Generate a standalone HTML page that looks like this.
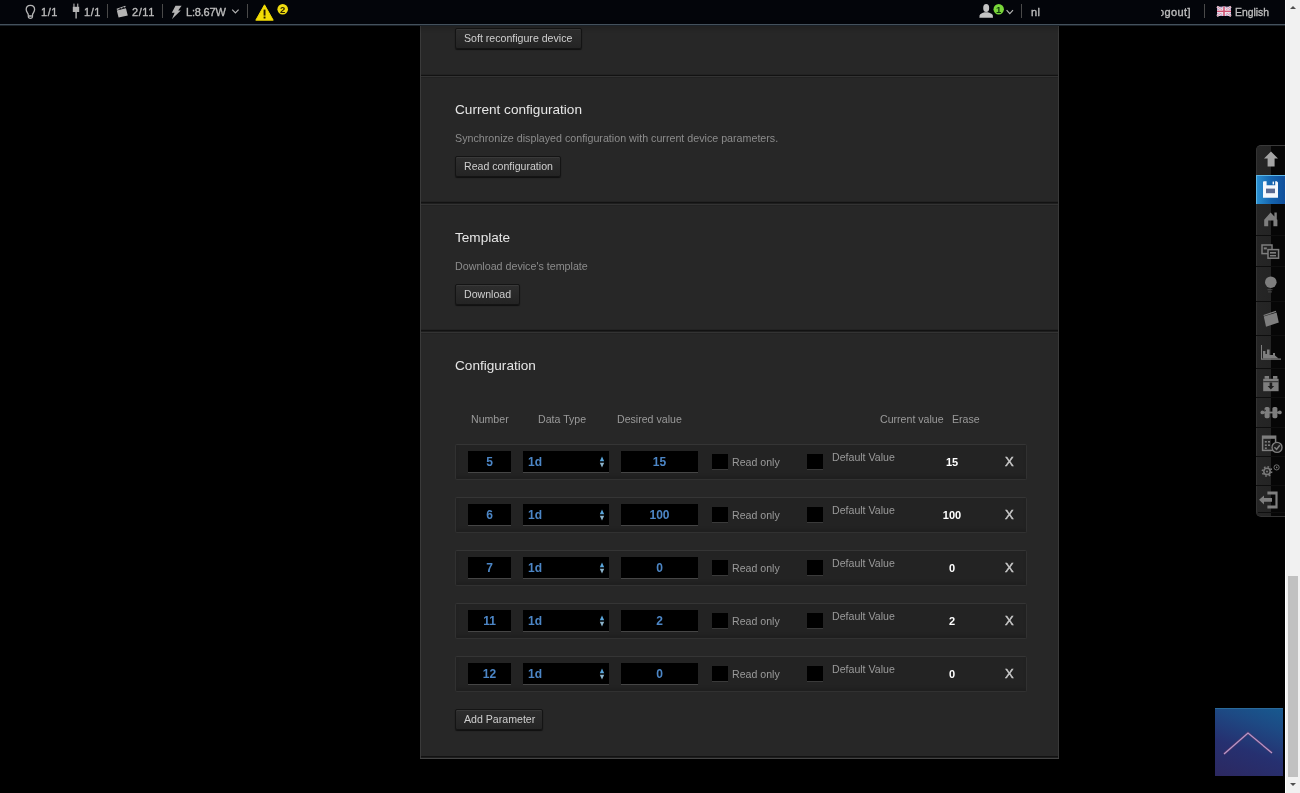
<!DOCTYPE html>
<html><head><meta charset="utf-8">
<style>
*{box-sizing:border-box}
html,body{margin:0;padding:0}
body{width:1300px;height:793px;overflow:hidden;background:#000;position:relative;-webkit-font-smoothing:antialiased;font-family:"Liberation Sans",sans-serif;}
.a{position:absolute;white-space:nowrap}
#hdr{position:absolute;left:0;top:0;width:1286px;height:24px;background:#03050a;}
#hdrline{position:absolute;left:0;top:24px;width:1286px;height:1px;background:#44515c;box-shadow:0 2px 5px rgba(0,0,0,.75)}
#hdrline2{position:absolute;left:0;top:25px;width:1286px;height:1px;background:#1a2128;}
.ht{font-size:11px;font-weight:normal;color:#bdbdbd;line-height:13px;-webkit-text-stroke:0.35px #bdbdbd;letter-spacing:0.6px}
.sep{position:absolute;width:1px;background:#4a4a4a;top:4px;height:14px}
#panel{position:absolute;left:420px;top:0;width:639px;height:759px;background:#272727;border-left:1px solid #3a3a3a;border-right:1px solid #3a3a3a;}
.hs{position:absolute;left:421px;width:637px;height:1px;}
.btn{position:absolute;height:21px;background:linear-gradient(#2e2e2e,#242424);border:1px solid #141414;box-shadow:inset 0 1px 0 #3a3a3a,0 1px 1px rgba(0,0,0,.6);border-radius:2px;color:#cfcfcf;font-size:10.6px;line-height:19px;padding:0 0 0 8px;}
.h2{font-size:13.6px;color:#e6e6e6;line-height:16px;}
.desc{font-size:10.7px;color:#8c8c8c;line-height:13px;}
.th{font-size:10.6px;color:#9a9a9a;line-height:13px;}
.row{position:absolute;left:455px;width:572px;height:36px;background:#232323;border:1px solid #313131;border-top-color:#353535;border-radius:2px;box-shadow:inset 0 -3px 3px rgba(0,0,0,.12)}
.inp{position:absolute;height:22px;background:#000;border-bottom:1px solid #454545;color:#4c86c6;font-size:12px;font-weight:bold;line-height:23px;text-align:center;}
.cb{position:absolute;width:16px;height:16px;background:#000;border-bottom:1px solid #3a3a3a}
.lbl{font-size:10.6px;color:#9a9a9a;line-height:13px;}
.cv{font-size:11px;color:#fff;font-weight:bold;line-height:13px;text-align:center;width:40px}
.x{font-size:13px;color:#c8c8c8;line-height:14px;font-weight:normal;-webkit-text-stroke:0.45px #c8c8c8}
#tb{position:absolute;left:1256px;top:145px;width:29px;height:372px;background:linear-gradient(90deg,#333 0,#333 1px,#262626 1px,#242424 15px,#060606 15px,#060606 100%);border-radius:5px 0 0 5px;border-top:1px solid #3a3a3a;border-bottom:1px solid #333}
.tbs{position:absolute;left:1256px;width:29px;height:2px;background:linear-gradient(#0c0c0c 50%,#333 50%)}
#tbact{position:absolute;left:1256px;top:175px;width:29px;height:29px;background:linear-gradient(90deg,#2a8fd0,#1565b0 50%,#0f4e9a);border-top:1px solid #5cb6e6;border-left:1px solid #5cb6e6}
.tbs{position:absolute;left:1256px;width:29px;height:1px;background:#0e0e0e}
#sb{position:absolute;left:1285px;top:0;width:15px;height:793px;background:#f1f1f1;border-left:1px solid #fff}
#thumb{position:absolute;left:1288px;top:576px;width:10px;height:201px;background:#c1c1c1}
#sbu{position:absolute;left:1290px;top:6px;width:0;height:0;border-left:3.5px solid transparent;border-right:3.5px solid transparent;border-bottom:3.5px solid #505050}
#sbd{position:absolute;left:1290px;top:783px;width:0;height:0;border-left:3.5px solid transparent;border-right:3.5px solid transparent;border-top:3.5px solid #505050}
#totop{position:absolute;left:1215px;top:708px;width:68px;height:68px;background:linear-gradient(20deg,#2c2860 0%,#263070 40%,#1d4a84 75%,#17598f 100%);border-top:1px solid #2a6a9a}
</style></head>
<body>
<div id="root" style="position:absolute;left:0;top:0;width:1300px;height:793px;will-change:transform">
<!-- panel -->
<div id="panel"></div>
<div class="hs" style="top:74px;background:#222"></div>
<div class="hs" style="top:75px;background:#121212"></div>
<div class="hs" style="top:76px;background:#333"></div>
<div class="hs" style="top:77px;background:#222"></div>
<div class="hs" style="top:201px;background:#222"></div>
<div class="hs" style="top:202px;background:#121212"></div>
<div class="hs" style="top:203px;background:#1e1e1e"></div>
<div class="hs" style="top:204px;background:#333"></div>
<div class="hs" style="top:205px;background:#232323"></div>
<div class="hs" style="top:329px;background:#222"></div>
<div class="hs" style="top:330px;background:#121212"></div>
<div class="hs" style="top:331px;background:#1e1e1e"></div>
<div class="hs" style="top:332px;background:#333"></div>
<div class="hs" style="top:333px;background:#232323"></div>
<div class="hs" style="top:756px;background:#121212"></div>
<div class="hs" style="top:757px;background:#1e1e1e"></div>
<div class="hs" style="top:758px;background:#444;left:420px;width:639px"></div>

<div class="btn a" style="left:455px;top:28px;width:127px">Soft reconfigure device</div>

<div class="a h2" style="left:455px;top:102px">Current configuration</div>
<div class="a desc" style="left:455px;top:132px">Synchronize displayed configuration with current device parameters.</div>
<div class="btn a" style="left:455px;top:156px;width:106px">Read configuration</div>

<div class="a h2" style="left:455px;top:230px">Template</div>
<div class="a desc" style="left:455px;top:260px">Download device's template</div>
<div class="btn a" style="left:455px;top:284px;width:65px">Download</div>

<div class="a h2" style="left:455px;top:358px">Configuration</div>
<div class="a th" style="left:471px;top:413px">Number</div>
<div class="a th" style="left:538px;top:413px">Data Type</div>
<div class="a th" style="left:617px;top:413px">Desired value</div>
<div class="a th" style="left:880px;top:413px">Current value</div>
<div class="a th" style="left:952px;top:413px">Erase</div>

<!--ROWS-->
<div class="row" style="top:444px"></div>
<div class="inp" style="left:468px;top:451px;width:43px">5</div>
<div class="inp" style="left:523px;top:451px;width:86px;text-align:left;padding-left:5px">1d</div>
<svg class="a" style="left:599px;top:456px" width="6" height="12" viewBox="0 0 6 12"><path d="M3 0.5 L5.2 5.2 H0.8Z" fill="#5aa6dc"/><path d="M0.8 6.8 H5.2 L3 11.5Z" fill="#8cb4cc"/></svg>
<div class="inp" style="left:621px;top:451px;width:77px">15</div>
<div class="cb" style="left:712px;top:454px"></div>
<div class="a lbl" style="left:732px;top:456px">Read only</div>
<div class="cb" style="left:807px;top:454px"></div>
<div class="a lbl" style="left:832px;top:451px">Default Value</div>
<div class="a cv" style="left:932px;top:456px">15</div>
<div class="a x" style="left:1005px;top:455px">X</div>
<div class="row" style="top:497px"></div>
<div class="inp" style="left:468px;top:504px;width:43px">6</div>
<div class="inp" style="left:523px;top:504px;width:86px;text-align:left;padding-left:5px">1d</div>
<svg class="a" style="left:599px;top:509px" width="6" height="12" viewBox="0 0 6 12"><path d="M3 0.5 L5.2 5.2 H0.8Z" fill="#5aa6dc"/><path d="M0.8 6.8 H5.2 L3 11.5Z" fill="#8cb4cc"/></svg>
<div class="inp" style="left:621px;top:504px;width:77px">100</div>
<div class="cb" style="left:712px;top:507px"></div>
<div class="a lbl" style="left:732px;top:509px">Read only</div>
<div class="cb" style="left:807px;top:507px"></div>
<div class="a lbl" style="left:832px;top:504px">Default Value</div>
<div class="a cv" style="left:932px;top:509px">100</div>
<div class="a x" style="left:1005px;top:508px">X</div>
<div class="row" style="top:550px"></div>
<div class="inp" style="left:468px;top:557px;width:43px">7</div>
<div class="inp" style="left:523px;top:557px;width:86px;text-align:left;padding-left:5px">1d</div>
<svg class="a" style="left:599px;top:562px" width="6" height="12" viewBox="0 0 6 12"><path d="M3 0.5 L5.2 5.2 H0.8Z" fill="#5aa6dc"/><path d="M0.8 6.8 H5.2 L3 11.5Z" fill="#8cb4cc"/></svg>
<div class="inp" style="left:621px;top:557px;width:77px">0</div>
<div class="cb" style="left:712px;top:560px"></div>
<div class="a lbl" style="left:732px;top:562px">Read only</div>
<div class="cb" style="left:807px;top:560px"></div>
<div class="a lbl" style="left:832px;top:557px">Default Value</div>
<div class="a cv" style="left:932px;top:562px">0</div>
<div class="a x" style="left:1005px;top:561px">X</div>
<div class="row" style="top:603px"></div>
<div class="inp" style="left:468px;top:610px;width:43px">11</div>
<div class="inp" style="left:523px;top:610px;width:86px;text-align:left;padding-left:5px">1d</div>
<svg class="a" style="left:599px;top:615px" width="6" height="12" viewBox="0 0 6 12"><path d="M3 0.5 L5.2 5.2 H0.8Z" fill="#5aa6dc"/><path d="M0.8 6.8 H5.2 L3 11.5Z" fill="#8cb4cc"/></svg>
<div class="inp" style="left:621px;top:610px;width:77px">2</div>
<div class="cb" style="left:712px;top:613px"></div>
<div class="a lbl" style="left:732px;top:615px">Read only</div>
<div class="cb" style="left:807px;top:613px"></div>
<div class="a lbl" style="left:832px;top:610px">Default Value</div>
<div class="a cv" style="left:932px;top:615px">2</div>
<div class="a x" style="left:1005px;top:614px">X</div>
<div class="row" style="top:656px"></div>
<div class="inp" style="left:468px;top:663px;width:43px">12</div>
<div class="inp" style="left:523px;top:663px;width:86px;text-align:left;padding-left:5px">1d</div>
<svg class="a" style="left:599px;top:668px" width="6" height="12" viewBox="0 0 6 12"><path d="M3 0.5 L5.2 5.2 H0.8Z" fill="#5aa6dc"/><path d="M0.8 6.8 H5.2 L3 11.5Z" fill="#8cb4cc"/></svg>
<div class="inp" style="left:621px;top:663px;width:77px">0</div>
<div class="cb" style="left:712px;top:666px"></div>
<div class="a lbl" style="left:732px;top:668px">Read only</div>
<div class="cb" style="left:807px;top:666px"></div>
<div class="a lbl" style="left:832px;top:663px">Default Value</div>
<div class="a cv" style="left:932px;top:668px">0</div>
<div class="a x" style="left:1005px;top:667px">X</div>
<!--/ROWS-->

<div class="btn a" style="left:455px;top:709px;width:88px">Add Parameter</div>

<!-- header -->
<div id="hdr"></div>
<div id="hdrline"></div>
<div id="hdrline2"></div>
<div class="a ht" style="left:41px;top:6px">1/1</div>
<div class="a ht" style="left:84px;top:6px">1/1</div>
<div class="sep" style="left:107px"></div>
<div class="a ht" style="left:132px;top:6px">2/11</div>
<div class="sep" style="left:162px"></div>
<div class="a ht" style="left:186px;top:6px;letter-spacing:-0.2px">L:8.67W</div>
<div class="sep" style="left:247px"></div>
<div class="sep" style="left:1021px"></div>
<div class="a" style="left:1031px;top:0;width:10px;height:24px;overflow:hidden"><div class="a ht" style="left:0;top:6px;letter-spacing:0.3px">nl:</div></div>
<div class="a" style="left:1161px;top:0;width:32px;height:24px;overflow:hidden"><div class="a ht" style="left:-3px;top:6px;letter-spacing:0.4px">ogout]</div></div>
<div class="sep" style="left:1204px"></div>
<div class="a ht" style="left:1235px;top:6px;letter-spacing:0;font-size:10.4px">English</div>
<!--HDRICONS-->
<svg class="a" style="left:0;top:0" width="1286" height="24" viewBox="0 0 1286 24">
 <!-- bulb -->
 <path d="M30.4 5.3 C27.8 5.3 26.2 7.3 26.2 9.6 C26.2 11.6 27.6 12.8 28.2 14.2 L28.4 17.2 C28.6 18 29.2 18.3 30.4 18.3 C31.6 18.3 32.2 18 32.4 17.2 L32.6 14.2 C33.2 12.8 34.6 11.6 34.6 9.6 C34.6 7.3 33 5.3 30.4 5.3Z" fill="none" stroke="#b4b4b4" stroke-width="1.3"/>
 <rect x="29" y="15.2" width="2.8" height="1.6" fill="#b4b4b4"/>
 <!-- plug -->
 <rect x="73.4" y="3.6" width="1.1" height="3.4" fill="#b4b4b4"/>
 <rect x="77.2" y="3.6" width="1.1" height="3.4" fill="#b4b4b4"/>
 <rect x="72.8" y="6.8" width="6.4" height="5.2" fill="#b4b4b4"/>
 <rect x="75.4" y="12" width="1.4" height="6.5" fill="#b4b4b4"/>
 <!-- clapper -->
 <path d="M116.8 10.4 L125.9 8.2 L127.8 15.6 L118.6 17.4Z" fill="#b4b4b4"/>
 <path d="M116.6 8.8 L125.2 5.8 L125.7 7.1 L117 9.9Z" fill="#b4b4b4"/>
 <path d="M119.4 8.2 L120.4 7.8 L121 8.9 L120 9.2Z M122.4 7.2 L123.4 6.8 L124 7.9 L123 8.2Z" fill="#03050a"/>
 <!-- bolt -->
 <path d="M175.5 5.8 L181.6 5.8 L178.2 10.6 L180.8 10.6 L172 19 L174.6 12.8 L171.8 12.8Z" fill="#b4b4b4"/>
 <!-- chevron -->
 <polyline points="232.2,9.6 235.4,12.8 238.6,9.6" fill="none" stroke="#b4b4b4" stroke-width="1.2"/>
 <!-- warning -->
 <path d="M264.5 4.8 L273.2 20.2 L255.8 20.2Z" fill="#f3dd05" stroke="#f3dd05" stroke-width="1" stroke-linejoin="round"/>
 <rect x="263.6" y="9.6" width="1.9" height="6" fill="#2a1a00"/>
 <rect x="263.6" y="16.6" width="1.9" height="1.9" fill="#2a1a00"/>
 <circle cx="282.7" cy="9.3" r="5.3" fill="#f0dc10"/>
 <text x="282.7" y="12.9" font-family="Liberation Sans" font-weight="bold" font-size="9.5" text-anchor="middle" fill="#2a2200">2</text>
 <!-- user -->
 <ellipse cx="986.2" cy="8" rx="3" ry="3.9" fill="#c4c4c4"/>
 <path d="M979.4 17.8 L979.6 15.4 C980 13.6 982.4 12.8 984.6 12.2 L987.8 12.2 C990 12.8 992.4 13.6 992.8 15.4 L993 17.8Z" fill="#c4c4c4"/>
 <circle cx="998.7" cy="9.3" r="5.2" fill="#79d63a"/>
 <text x="998.7" y="12.8" font-family="Liberation Sans" font-weight="bold" font-size="9.5" text-anchor="middle" fill="#0e3a0a">1</text>
 <polyline points="1006.6,10.2 1009.8,13.6 1013,10.2" fill="none" stroke="#b4b4b4" stroke-width="1.2"/>
 <!-- flag -->
 <g transform="translate(1217,6.6)">
  <rect width="14" height="9.4" fill="#b8a0c8"/>
  <path d="M0 0 L14 9.4 M14 0 L0 9.4" stroke="#f0e8f0" stroke-width="2.2"/>
  <path d="M0 0 L14 9.4 M14 0 L0 9.4" stroke="#d06080" stroke-width="0.7"/>
  <rect x="5.4" y="0" width="3.2" height="9.4" fill="#f4eef4"/>
  <rect x="0" y="3.3" width="14" height="2.8" fill="#f4eef4"/>
  <rect x="6.2" y="0" width="1.6" height="9.4" fill="#d05070"/>
  <rect x="0" y="4" width="14" height="1.4" fill="#d05070"/>
 </g>
</svg><!--/HDRICONS-->

<!-- toolbar -->
<div id="tb"></div>
<div id="tbact"></div>
<div class="tbs" style="top:235px"></div>
<div class="tbs" style="top:266px"></div>
<div class="tbs" style="top:301px"></div>
<div class="tbs" style="top:335px"></div>
<div class="tbs" style="top:368px"></div>
<div class="tbs" style="top:397px"></div>
<div class="tbs" style="top:427px"></div>
<div class="tbs" style="top:456px"></div>
<div class="tbs" style="top:485px"></div>
<div class="tbs" style="top:512px;left:1258px;width:27px"></div>
<!--TBICONS-->
<svg class="a" style="left:1256px;top:145px" width="29" height="372" viewBox="1256 145 29 372">
 <!-- up arrow -->
 <path d="M1271 151.5 L1278 158.6 L1274.6 158.6 L1274.6 166.4 L1267.6 166.4 L1267.6 158.6 L1264 158.6Z" fill="#a4a4a4"/>
 <!-- floppy -->
 <path d="M1263 182.2 Q1263 181.2 1264 181.2 L1266.6 181.2 L1266.6 185.2 L1275.2 185.2 L1275.2 181.2 L1276.8 181.2 L1278 182.4 L1278 197.8 L1263 197.8Z" fill="#f4f8fc"/>
 <rect x="1272.6" y="181.6" width="1.4" height="2.8" fill="#f4f8fc"/>
 <rect x="1266" y="188.6" width="9" height="4.6" fill="#5a6a90"/>
 <!-- home -->
 <path d="M1264.2 219.8 L1270.6 212.4 L1274.4 216.6 L1274.4 212.4 L1276.8 212.4 L1276.8 219.2 L1277.4 219.8 L1277.4 226.2 L1273.4 226.2 L1273.4 220.6 L1268.2 220.6 L1268.2 226.2 L1264.2 226.2Z" fill="#7e7e7e"/>
 <!-- display -->
 <rect x="1262" y="245" width="10" height="8.6" fill="none" stroke="#7e7e7e" stroke-width="1.5"/>
 <rect x="1268" y="249.6" width="10.6" height="8.6" fill="#1a1a1a" stroke="#7e7e7e" stroke-width="1.5"/>
 <rect x="1263.8" y="247.4" width="3" height="2" fill="#7e7e7e"/>
 <rect x="1270" y="252" width="6" height="1.6" fill="#7e7e7e"/>
 <rect x="1270" y="255" width="6" height="1.4" fill="#7e7e7e"/>
 <!-- bulb -->
 <circle cx="1270.8" cy="282.2" r="5.8" fill="#7e7e7e"/>
 <rect x="1267.5" y="289.2" width="5" height="1" fill="#4a4a4a"/>
 <rect x="1268" y="291.4" width="4" height="1" fill="#4a4a4a"/>
 <!-- clapper -->
 <path d="M1263.8 316.6 L1276.6 312.6 L1278.8 322.6 L1266 326.8Z" fill="#7e7e7e"/>
 <path d="M1263.4 315 L1275.8 310.8 L1276.2 311.9 L1263.8 316Z" fill="#7e7e7e"/>
 <!-- chart -->
 <path d="M1261 345 L1262 345 L1262 358.6 L1281 358.6 L1281 359.8 L1261 359.8Z" fill="#7e7e7e"/>
 <path d="M1263 358.6 L1263 351 L1265.4 351 L1265.4 354 L1267 354 L1267 349.6 L1269.6 349.6 L1269.6 355 L1273 355 L1273 353 L1275 353 L1275 355.6 L1278.6 358.6Z" fill="#7e7e7e"/>
 <!-- box download -->
 <rect x="1263.2" y="378.8" width="15.4" height="12.4" fill="#7e7e7e"/>
 <rect x="1264.6" y="376" width="4.4" height="2.8" fill="#7e7e7e"/>
 <rect x="1273" y="376" width="4.4" height="2.8" fill="#7e7e7e"/>
 <rect x="1263.2" y="381.2" width="15.4" height="1" fill="#2a2a2a"/>
 <path d="M1269.6 382.6 L1272.2 382.6 L1272.2 386 L1274.2 386 L1270.9 389.6 L1267.6 386 L1269.6 386Z" fill="#1e1e1e"/>
 <!-- puzzle -->
 <rect x="1264.6" y="407" width="5" height="11.2" rx="1.6" fill="#7e7e7e"/>
 <rect x="1272.4" y="407" width="5" height="11.2" rx="1.6" fill="#7e7e7e"/>
 <circle cx="1262.4" cy="412.4" r="1.9" fill="#7e7e7e"/>
 <circle cx="1279.8" cy="412.4" r="1.9" fill="#7e7e7e"/>
 <rect x="1262.4" y="411.6" width="17.4" height="1.8" fill="#7e7e7e"/>
 <rect x="1264.6" y="409.8" width="1.2" height="1.4" fill="#2a2a2a"/>
 <!-- calendar check -->
 <rect x="1262.6" y="436.2" width="13" height="14.2" fill="none" stroke="#7e7e7e" stroke-width="1.5"/>
 <rect x="1262.6" y="436" width="13" height="2.8" fill="#7e7e7e"/>
 <rect x="1264.8" y="441" width="2" height="1.6" fill="#7e7e7e"/><rect x="1268" y="441" width="2" height="1.6" fill="#7e7e7e"/>
 <rect x="1264.8" y="444.4" width="2" height="1.6" fill="#7e7e7e"/><rect x="1268" y="444.4" width="2" height="1.6" fill="#7e7e7e"/>
 <rect x="1264.8" y="447.4" width="2" height="1.6" fill="#7e7e7e"/>
 <circle cx="1277" cy="447.4" r="5" fill="#1a1a1a" stroke="#7e7e7e" stroke-width="1.4"/>
 <polyline points="1274.4,447.2 1276.6,449.4 1279.8,445.2" fill="none" stroke="#7e7e7e" stroke-width="1.6"/>
 <!-- gear -->
 <circle cx="1267" cy="471.4" r="3.2" fill="none" stroke="#7a7a7a" stroke-width="1.5"/>
 <circle cx="1267" cy="471.4" r="4.6" fill="none" stroke="#7a7a7a" stroke-width="1.6" stroke-dasharray="1.6 2"/>
 <circle cx="1267" cy="471.4" r="1" fill="#7a7a7a"/>
 <circle cx="1276.6" cy="467.4" r="2.6" fill="none" stroke="#7a7a7a" stroke-width="0.9"/>
 <path d="M1276 466.2 L1277.8 467.4 L1276 468.6Z" fill="#7a7a7a"/>
 <!-- exit -->
 <path d="M1267.4 491.4 L1277.6 491.4 L1277.6 508.6 L1267.4 508.6 L1267.4 505.6 L1275.4 505.6 L1275.4 494.4 L1267.4 494.4Z" fill="#7e7e7e"/>
 <path d="M1259 499.8 L1264 495.4 L1264 498 L1272 498 L1272 501.8 L1264 501.8 L1264 504.4Z" fill="#7e7e7e"/>
</svg><!--/TBICONS-->

<div id="totop"></div>
<svg class="a" style="left:1215px;top:708px" width="68" height="68" viewBox="0 0 68 68"><polyline points="9,46 33,25 57,45" fill="none" stroke="#7a3a6a" stroke-width="2.6" opacity="0.5"/><polyline points="9,46 33,25 57,45" fill="none" stroke="#b898c8" stroke-width="1.2"/></svg>

<div id="sb"></div>
<div id="thumb"></div>
<div id="sbu"></div>
<div id="sbd"></div>
</div>
</body></html>
